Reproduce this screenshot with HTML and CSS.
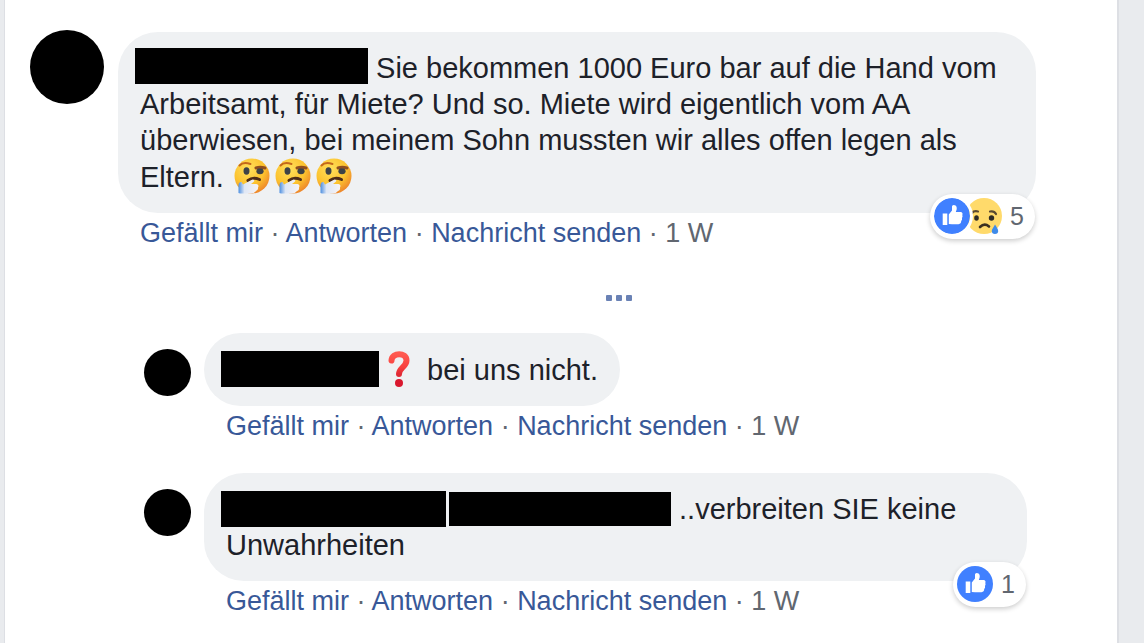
FILE: index.html
```html
<!DOCTYPE html>
<html lang="de">
<head>
<meta charset="utf-8">
<meta name="viewport" content="width=device-width, initial-scale=1">
<title>Kommentare</title>
<link rel="stylesheet" href="styles.css">
</head>
<body>
<svg class="defs" aria-hidden="true">
  <defs>
    <radialGradient id="face" cx="0.4" cy="0.3" r="0.75">
      <stop offset="0" stop-color="#ffe05c"/>
      <stop offset="0.6" stop-color="#fcc22e"/>
      <stop offset="1" stop-color="#ec7f2a"/>
    </radialGradient>
    <linearGradient id="hand" x1="0" x2="1">
      <stop offset="0" stop-color="#4d8fe0"/>
      <stop offset="0.3" stop-color="#dfe7f5"/>
      <stop offset="1" stop-color="#f6f3f5"/>
    </linearGradient>
    <linearGradient id="red" x1="0" y1="0" x2="0" y2="1">
      <stop offset="0" stop-color="#ff5a50"/>
      <stop offset="0.65" stop-color="#f8403f"/>
      <stop offset="1" stop-color="#e02a34"/>
    </linearGradient>
    <symbol id="thinking" viewBox="0 0 36 36">
      <circle cx="18" cy="18" r="17.500" fill="url(#face)"/>
      <path d="M5.500 7.500Q9 3.500 16.500 6" fill="none" stroke="#c3681c" stroke-width="2" stroke-linecap="round"/>
      <path d="M22 10Q26 8.500 31 10" fill="none" stroke="#8f4e20" stroke-width="3" stroke-linecap="round"/>
      <ellipse cx="12.500" cy="13" rx="3" ry="3.700" fill="#3d4247"/>
      <ellipse cx="26" cy="13.300" rx="3.600" ry="3" fill="#3d4247"/>
      <path d="M14 22.500Q19 18.500 25.500 21.500" fill="none" stroke="#4e2c18" stroke-width="3" stroke-linecap="round"/>
      <path d="M4.500 35V27Q5 23.500 7.500 24L9 26.500 18.500 21.500Q21 21.500 20 23.500L17 26H22.500Q25.500 27 24 29.500 24.500 32 22 33 20 35.500 17 35.500H6Z" fill="url(#hand)"/>
    </symbol>
    <symbol id="like" viewBox="0 0 36 36">
      <circle cx="18" cy="18" r="18" fill="#4080ff"/>
      <path d="M8.700 15.500H13.300V27H8.700ZM14.800 26V16.500L18 12.500V8.500Q18 7 19.700 7C22.700 7 23.200 10 22.500 12L21.800 14H27Q29.200 14.800 28.300 17 29 18.500 28 20 28.500 22 27.200 23 27.300 25.800 24.500 26.200H18Z" fill="#fff"/>
    </symbol>
    <symbol id="sad" viewBox="0 0 36 36">
      <circle cx="18" cy="18" r="18" fill="#ffda6b"/>
      <path d="M6 15Q8 12.500 12 13.500M24 13.500Q28 12.500 30 16" fill="none" stroke="#5a4930" stroke-width="2.200" stroke-linecap="round"/>
      <ellipse cx="10.500" cy="20" rx="2.300" ry="2.800" fill="#2d2a26"/>
      <ellipse cx="25.500" cy="20" rx="2.700" ry="2.800" fill="#2d2a26"/>
      <path d="M14 29Q18.500 24.500 23 28.500" fill="none" stroke="#3b3020" stroke-width="2.600" stroke-linecap="round"/>
      <path d="M29 26.500C27.500 29.500 25.800 31 25.800 33A3.200 3 0 0 0 32.200 33C32.200 31 30.500 29 29 26.500Z" fill="#3f8bea"/>
    </symbol>
    <symbol id="question" viewBox="0 0 22 36">
      <path d="M3.500 9.500C4 1 18.500 1 18.500 9.500 18.500 15.500 11 17 11 23" fill="none" stroke="url(#red)" stroke-width="6" stroke-linecap="round"/>
      <circle cx="11" cy="32" r="4" fill="#d9182e"/>
    </symbol>
  </defs>
</svg>

<main class="panel">
  <article class="comment">
    <span class="avatar"></span>
    <div class="content">
      <div class="bubble">
        <p class="text"><span class="name name-main"></span> Sie bekommen 1000 Euro bar auf die Hand vom Arbeitsamt, für Miete? Und so. Miete wird eigentlich vom AA überwiesen, bei meinem Sohn mussten wir alles offen legen als Eltern. <span class="emojis"><svg class="emoji" role="img" aria-label="nachdenklich"><use href="#thinking"/></svg><svg class="emoji" role="img" aria-label="nachdenklich"><use href="#thinking"/></svg><svg class="emoji" role="img" aria-label="nachdenklich"><use href="#thinking"/></svg></span></p>
        <button class="reactions" type="button"><svg class="reaction reaction-top" aria-hidden="true"><use href="#like"/></svg><svg class="reaction reaction-under" aria-hidden="true"><use href="#sad"/></svg><span class="count">5</span></button>
      </div>
      <div class="actions"><a href="#">Gefällt mir</a> · <a href="#">Antworten</a> · <a href="#">Nachricht senden</a> · <time>1 W</time></div>
    </div>
  </article>

  <button class="more" type="button" aria-label="Weitere Antworten"><i></i><i></i><i></i></button>

  <section class="replies">
    <article class="comment reply">
      <span class="avatar"></span>
      <div class="content">
        <div class="bubble">
          <p class="text"><span class="name name-short"></span><svg class="question" role="img" aria-label="Fragezeichen"><use href="#question"/></svg> bei uns nicht.</p>
        </div>
        <div class="actions"><a href="#">Gefällt mir</a> · <a href="#">Antworten</a> · <a href="#">Nachricht senden</a> · <time>1 W</time></div>
      </div>
    </article>

    <article class="comment reply">
      <span class="avatar"></span>
      <div class="content">
        <div class="bubble">
          <p class="text"><span class="name name-long"></span><span class="name name-mention"></span> ..verbreiten SIE keine Unwahrheiten</p>
          <button class="reactions" type="button"><svg class="reaction" aria-hidden="true"><use href="#like"/></svg><span class="count">1</span></button>
        </div>
        <div class="actions"><a href="#">Gefällt mir</a> · <a href="#">Antworten</a> · <a href="#">Nachricht senden</a> · <time>1 W</time></div>
      </div>
    </article>
  </section>
</main>
</body>
</html>
```
FILE: styles.css
```css
* {
  box-sizing: border-box;
}

body {
  margin: 0;
  background: #e9ebee;
  color: #1d2129;
  font-family: "Liberation Sans", Arial, sans-serif;
  font-size: 29px;
  line-height: 36px;
}

button {
  margin: 0;
  padding: 0;
  border: 0;
  background: none;
  font: inherit;
  cursor: pointer;
}

.defs {
  position: absolute;
  width: 0;
  height: 0;
}

.panel {
  min-height: 100vh;
  margin: 0 25px 0 4px;
  padding: 32px 81px 20px 25px;
  border: solid #dddfe4;
  border-width: 0 2px 0 1px;
  background: #fff;
}

.comment {
  display: flex;
  align-items: flex-start;
  gap: 14px;
}

.avatar {
  flex: none;
  width: 74px;
  height: 74px;
  margin-top: -2px;
  border-radius: 50%;
  background: #000;
}

.content {
  flex: 1;
  min-width: 0;
}

.bubble {
  position: relative;
  width: fit-content;
  padding: 18px 22px;
  border-radius: 40px;
  background: #eff1f3;
}

.text {
  margin: 0;
}

.name {
  display: inline-block;
  height: 36px;
  margin-left: -5px;
  background: #000;
  vertical-align: top;
}

.name-main {
  width: 233px;
  margin-top: -2px;
}

.name-short {
  width: 158px;
}

.name-long {
  width: 225px;
}

.name-mention {
  width: 222px;
  height: 34px;
  margin: 1px 0 0 3px;
}

.emojis {
  display: inline-flex;
  gap: 5px;
  margin-left: 2px;
  vertical-align: -7px;
}

.emoji {
  width: 36px;
  height: 36px;
}

.question {
  width: 22px;
  height: 36px;
  margin: 0 9px;
  vertical-align: -7px;
}

.actions {
  padding-left: 22px;
  color: #616770;
  font-size: 27px;
  line-height: 40px;
}

.actions a {
  color: #385898;
  text-decoration: none;
}

.actions a:hover {
  text-decoration: underline;
}

.reactions {
  position: absolute;
  right: 1px;
  bottom: -26px;
  display: flex;
  align-items: center;
  height: 45px;
  padding: 0 11px 2px 4px;
  border-radius: 23px;
  background: #fff;
  box-shadow: 0 2px 5px rgba(0, 0, 0, 0.2);
  color: #616770;
  font-size: 25px;
}

.reaction {
  width: 36px;
  height: 36px;
}

.reaction-top {
  z-index: 1;
  border-radius: 50%;
  box-shadow: 0 0 0 3px #fff;
}

.reaction-under {
  margin-left: -4px;
}

.count {
  margin-left: 8px;
}

.more {
  display: flex;
  align-items: center;
  justify-content: center;
  gap: 4px;
  width: 100%;
  height: 36px;
  margin: 27px 0 17px;
  padding-left: 172px;
}

.more i {
  width: 6px;
  height: 6px;
  border-radius: 1px;
  background: #6a82b5;
}

.replies {
  display: grid;
  gap: 27px;
  padding: 0 9px 0 114px;
}

.reply {
  gap: 13px;
}

.reply .avatar {
  width: 47px;
  height: 47px;
  margin-top: 16px;
}
```
